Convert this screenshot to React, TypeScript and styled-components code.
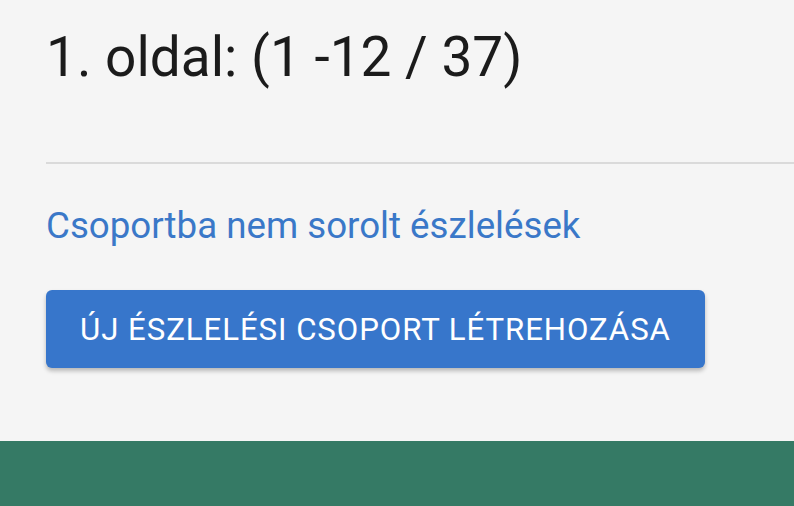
import styled, { createGlobalStyle } from "styled-components";

const GlobalStyle = createGlobalStyle`
  html, body {
    margin: 0;
    padding: 0;
    background-color: #f5f5f5;
    font-family: Roboto, "Liberation Sans", sans-serif;
  }
`;

const Page = styled.div`
  width: 794px;
  height: 506px;
  display: flex;
  flex-direction: column;
  overflow: hidden;
  background-color: #f5f5f5;
`;

const Content = styled.div`
  flex: 1;
  padding: 22px 0 0 46px;
  display: flex;
  flex-direction: column;
  align-items: flex-start;
`;

const Title = styled.h1`
  margin: 0;
  font-size: 55px;
  font-weight: 400;
  line-height: 70px;
  color: #1b1b1b;
`;

const Divider = styled.hr`
  align-self: stretch;
  margin: 70px 0 0;
  border: none;
  border-top: 2px solid #dadada;
`;

const GroupLink = styled.a`
  margin-top: 39px;
  font-size: 36.7px;
  line-height: 46px;
  color: #3a78c8;
  text-decoration: none;
  cursor: pointer;
`;

const PrimaryButton = styled.button`
  margin-top: 41px;
  width: 659px;
  height: 78px;
  padding: 0;
  border: none;
  border-radius: 6px;
  background-color: #3776cb;
  color: #fff;
  font-family: Roboto, "Liberation Sans", sans-serif;
  font-size: 31.2px;
  font-weight: 400;
  letter-spacing: 0.03em;
  text-transform: uppercase;
  box-shadow: 0 3px 4px rgba(0, 0, 0, 0.25);
  cursor: pointer;
`;

const Footer = styled.footer`
  height: 65px;
  background-color: #357a65;
`;

const App = (): JSX.Element => {
  return (
    <Page>
      <GlobalStyle />
      <Content>
        <Title>1. oldal: (1 -12 / 37)</Title>
        <Divider />
        <GroupLink>Csoportba nem sorolt észlelések</GroupLink>
        <PrimaryButton>Új észlelési csoport létrehozása</PrimaryButton>
      </Content>
      <Footer />
    </Page>
  );
};

export default App;
